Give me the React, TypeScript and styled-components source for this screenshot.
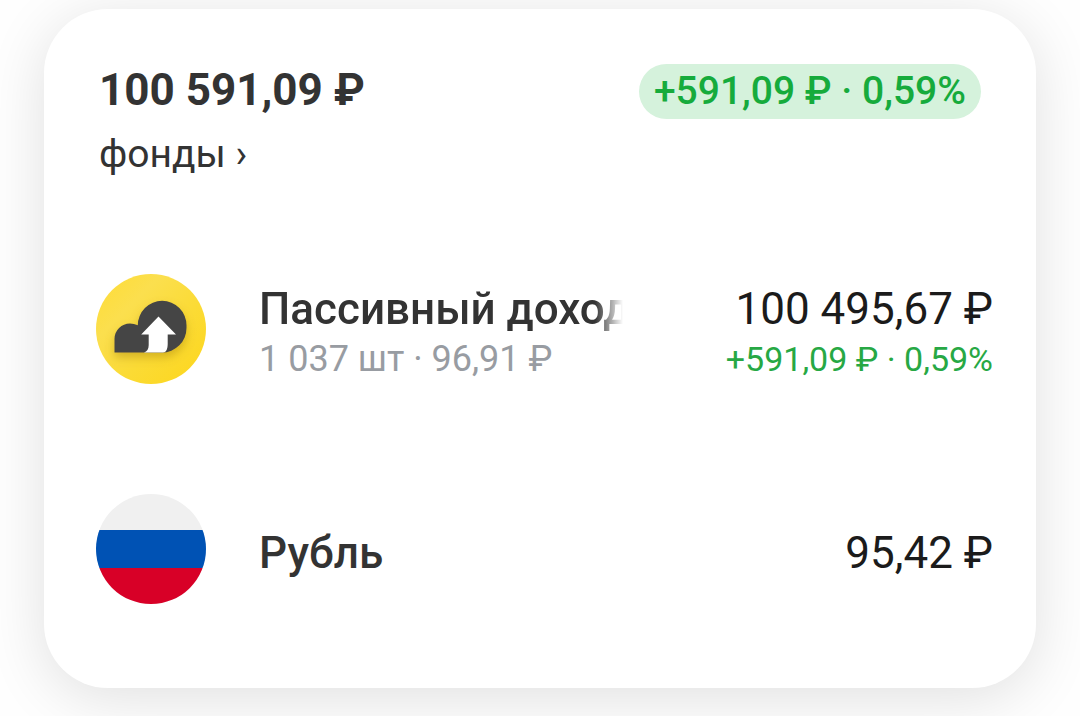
import React from "react";
import styled, { createGlobalStyle } from "styled-components";

const GlobalStyle = createGlobalStyle`
  * { box-sizing: border-box; }
  body {
    margin: 0;
    background: #fefefe;
    color: #333333;
    font-family: Roboto, "Noto Sans", sans-serif;
  }
  #root { overflow: hidden; }
`;

const Page = styled.main`
  padding: 9px 44px 28px;
`;

const Card = styled.section`
  padding: 55px 43px 84px 52px;
  border-radius: 64px;
  background: #ffffff;
  box-shadow: 0 10px 60px rgba(0, 0, 0, 0.12);
`;

const Header = styled.header`
  display: flex;
  align-items: flex-start;
  justify-content: space-between;
  padding: 0 12px 0 3px;
`;

const Total = styled.h1`
  margin: 0;
  font-size: 44px;
  line-height: 52px;
  font-weight: 700;
`;

const CategoryLink = styled.a`
  display: block;
  margin-top: 14px;
  color: inherit;
  font-size: 39px;
  line-height: 48px;
  text-decoration: none;
`;

const Badge = styled.span`
  padding: 0 15px;
  border-radius: 28px;
  background: #d5f2dc;
  color: #16ab3c;
  font-size: 39px;
  line-height: 55px;
  font-weight: 500;
  white-space: nowrap;
`;

const List = styled.ul`
  display: flex;
  flex-direction: column;
  gap: 110px;
  margin: 96px 0 0;
  padding: 0;
  list-style: none;
`;

const Row = styled.li`
  display: flex;
  align-items: center;
  height: 110px;
`;

const Icon = styled.svg`
  flex: none;
  width: 110px;
  height: 110px;
  margin-right: 53px;
`;

const Info = styled.div`
  flex: 0 1 364px;
  min-width: 0;
  padding-top: 8px;
`;

const Name = styled.div<{ $faded?: boolean }>`
  overflow: hidden;
  font-size: 44px;
  line-height: 52px;
  font-weight: 500;
  white-space: nowrap;
  ${(p) => p.$faded && "mask-image: linear-gradient(to right, #000 calc(100% - 28px), transparent);"}
`;

const Detail = styled.div`
  color: #989ca2;
  font-size: 36px;
  line-height: 48px;
  white-space: nowrap;
`;

const Amounts = styled.div`
  margin-left: auto;
  padding-top: 8px;
  text-align: right;
  white-space: nowrap;
`;

const Value = styled.div`
  color: #1b1b1b;
  font-size: 44px;
  line-height: 52px;
`;

const Gain = styled.div`
  color: #27a844;
  font-size: 34px;
  line-height: 48px;
`;

const FundIcon = () => (
  <Icon viewBox="0 0 110 110" aria-hidden="true">
    <defs>
      <linearGradient id="fund-bg" x1="0" y1="0" x2="1" y2="1">
        <stop offset="0" stopColor="#ffdc34" />
        <stop offset="0.3" stopColor="#fbdf4e" />
        <stop offset="0.6" stopColor="#fbdb35" />
        <stop offset="1" stopColor="#fdd61c" />
      </linearGradient>
      <filter id="fund-shadow" x="-20%" y="-20%" width="140%" height="150%">
        <feDropShadow dx="0" dy="5" stdDeviation="5" floodColor="#8a6500" floodOpacity="0.35" />
      </filter>
    </defs>
    <circle cx="55" cy="55" r="55" fill="url(#fund-bg)" />
    <path
      filter="url(#fund-shadow)"
      d="M18.500 78.500V65A15.500 15.500 0 0 1 34 49.500Q38 49.500 41.800 51.200A24.350 24.350 0 0 1 90.500 51.200V54A24.500 24.500 0 0 1 66 78.500Z"
      fill="#454545"
    />
    <path
      d="M62.500 42.500L80 60.500H71.700V70C71.700 75 70 78.500 67 78.500H48C51 77.500 52.700 75 52.700 71V60.500H45.200Z"
      fill="#ffffff"
    />
  </Icon>
);

const FlagIcon = () => (
  <Icon viewBox="0 0 110 110" aria-hidden="true">
    <clipPath id="flag-clip">
      <circle cx="55" cy="55" r="55" />
    </clipPath>
    <g clipPath="url(#flag-clip)">
      <rect width="110" height="110" fill="#f0f0f0" />
      <rect y="36" width="110" height="38" fill="#0052b4" />
      <rect y="74" width="110" height="36" fill="#d80027" />
    </g>
  </Icon>
);

export default function App() {
  return (
    <>
      <GlobalStyle />
      <Page>
        <Card>
          <Header>
            <div>
              <Total>100 591,09 ₽</Total>
              <CategoryLink href="#funds">фонды ›</CategoryLink>
            </div>
            <Badge>+591,09 ₽ · 0,59%</Badge>
          </Header>
          <List>
            <Row>
              <FundIcon />
              <Info>
                <Name $faded>Пассивный доход</Name>
                <Detail>1 037 шт · 96,91 ₽</Detail>
              </Info>
              <Amounts>
                <Value>100 495,67 ₽</Value>
                <Gain>+591,09 ₽ · 0,59%</Gain>
              </Amounts>
            </Row>
            <Row>
              <FlagIcon />
              <Info>
                <Name>Рубль</Name>
              </Info>
              <Amounts>
                <Value>95,42 ₽</Value>
              </Amounts>
            </Row>
          </List>
        </Card>
      </Page>
    </>
  );
}
